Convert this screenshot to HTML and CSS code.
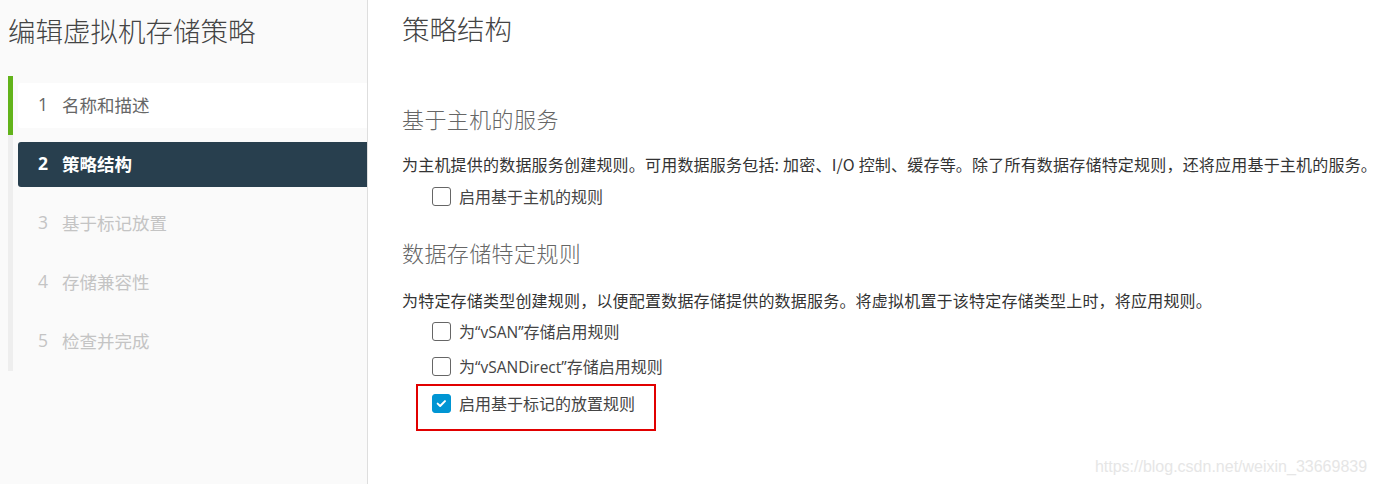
FILE: index.html
```html
<!DOCTYPE html>
<html lang="zh-CN">
<head>
<meta charset="utf-8">
<title>编辑虚拟机存储策略</title>
<link rel="stylesheet" href="styles.css">
</head>
<body>
<div class="wizard">
  <aside class="sidebar">
    <h1 class="wizard-title">编辑虚拟机存储策略</h1>
    <ol class="steps">
      <li class="step done"><div class="step-box"><span class="num">1</span><span>名称和描述</span></div></li>
      <li class="step active"><div class="step-box"><span class="num">2</span><span>策略结构</span></div></li>
      <li class="step"><div class="step-box"><span class="num">3</span><span>基于标记放置</span></div></li>
      <li class="step"><div class="step-box"><span class="num">4</span><span>存储兼容性</span></div></li>
      <li class="step"><div class="step-box"><span class="num">5</span><span>检查并完成</span></div></li>
    </ol>
  </aside>
  <main class="content">
    <h2 class="page-title">策略结构</h2>
    <section class="section first">
      <h3 class="section-title">基于主机的服务</h3>
      <p class="desc">为主机提供的数据服务创建规则。可用数据服务包括: 加密、I/O 控制、缓存等。除了所有数据存储特定规则，还将应用基于主机的服务。</p>
      <div class="check-list">
        <label class="check"><span class="box"></span><span>启用基于主机的规则</span></label>
      </div>
    </section>
    <section class="section">
      <h3 class="section-title">数据存储特定规则</h3>
      <p class="desc">为特定存储类型创建规则，以便配置数据存储提供的数据服务。将虚拟机置于该特定存储类型上时，将应用规则。</p>
      <div class="check-list">
        <label class="check"><span class="box"></span><span>为<span class="latin">“vSAN”</span>存储启用规则</span></label>
        <label class="check"><span class="box"></span><span>为<span class="latin">“vSANDirect”</span>存储启用规则</span></label>
        <div class="highlight">
          <label class="check"><span class="box checked"><svg viewBox="0 0 19 19" width="19" height="19"><path d="M5.2 9.6 L8 12.3 L13.4 6.8" fill="none" stroke="#fff" stroke-width="2.2" stroke-linecap="round" stroke-linejoin="round"/></svg></span><span>启用基于标记的放置规则</span></label>
        </div>
      </div>
    </section>
    <div class="watermark">https://blog.csdn.net/weixin_33669839</div>
  </main>
</div>
</body>
</html>
```

FILE: styles.css
```css
* { box-sizing: border-box; }
html, body { margin: 0; padding: 0; }
body {
  font-family: "Noto Sans CJK SC", "Noto Sans", sans-serif;
  color: #333;
  background: #fff;
  width: 1376px;
  height: 484px;
  overflow: hidden;
}
.wizard {
  display: flex;
  height: 484px;
}
.sidebar {
  width: 368px;
  flex: none;
  background: #fafafa;
  border-right: 1px solid #dedede;
  padding-top: 10px;
}
.wizard-title {
  margin: 0 0 0 8px;
  font-size: 27.5px;
  font-weight: 300;
  line-height: 40px;
  color: #444;
}
.steps {
  list-style: none;
  margin: 26px 0 0 8px;
  padding: 0;
}
.step {
  border-left: 5px solid #eeeeee;
  height: 59px;
  padding: 7px 0 7px 5px;
}
.step.done { border-left-color: #62b31a; }
.step-box {
  height: 45px;
  display: flex;
  align-items: center;
  padding: 0 0 3px 20px;
  border-radius: 3px 0 0 3px;
  font-size: 17.5px;
  color: #c4c4c4;
}
.step-box .num {
  width: 24px;
  font-family: "Open Sans", "Noto Sans", sans-serif;
}
.step.done .step-box { background: #fff; color: #666; }
.step.active .step-box { background: #283f4e; color: #fff; font-weight: 700; }
.content {
  flex: 1;
  position: relative;
  padding: 10px 0 0 34px;
}
.page-title {
  margin: 0;
  font-size: 27.5px;
  font-weight: 300;
  line-height: 36px;
  color: #444;
}
.section.first { margin-top: 57px; }
.section { margin-top: 29px; }
.section-title {
  margin: 0;
  font-size: 22px;
  letter-spacing: 0.4px;
  font-weight: 300;
  line-height: 30px;
  color: #666;
}
.desc {
  margin: 20px 0 0 0;
  font-size: 16px;
  letter-spacing: 0.2px;
  line-height: 22px;
  color: #333;
  white-space: nowrap;
}
.section + .section .desc { margin-top: 22px; }
.check-list {
  display: flex;
  flex-direction: column;
  gap: 11px;
  margin-top: 9px;
}
.section + .section .check-list { margin-top: 8px; }
.check {
  display: flex;
  align-items: center;
  gap: 8px;
  font-size: 16px;
  color: #444;
  margin-left: 30px;
  height: 24px;
}
.latin { font-family: "Open Sans", "Noto Sans", sans-serif; font-size: 15.5px; }
.box {
  width: 19px;
  height: 19px;
  border: 1px solid #666;
  border-radius: 3px;
  background: #fff;
  display: inline-flex;
  align-items: center;
  justify-content: center;
  flex: none;
}
.box.checked {
  background: #0095d3;
  border-color: #0095d3;
}
.box svg { width: 19px; height: 19px; }
.highlight {
  margin-left: 14px;
  margin-top: -5px;
  width: 240px;
  height: 47px;
  border: 2px solid #e10000;
  padding-top: 5px;
}
.highlight .check { margin-left: 14px; }
.watermark {
  position: absolute;
  right: 10px;
  bottom: 8px;
  font-family: "Liberation Sans", Arial, sans-serif;
  font-size: 16px;
  color: #e6e6e6;
}
```
